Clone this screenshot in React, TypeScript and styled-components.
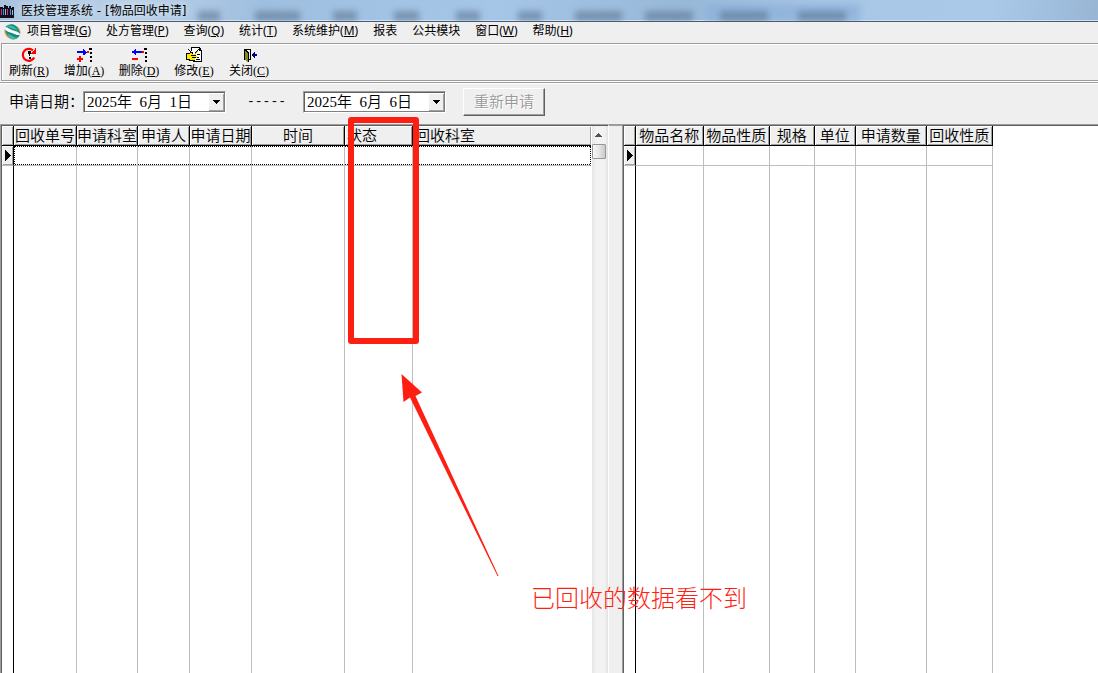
import React from "react";
import styled, { createGlobalStyle, css } from "styled-components";

const face = "#efefef";
const song = `"Liberation Serif", "Noto Sans CJK SC", serif`;
const ui = `"Noto Sans", "Noto Sans CJK SC", sans-serif`;

const GlobalStyle = createGlobalStyle`
  * { box-sizing: border-box; }
  body { margin: 0; background: ${face}; color: #000; font: 12px/16px ${ui}; }
  button, input { font: inherit; color: inherit; margin: 0; padding: 0; border: 0; border-radius: 0; background: none; }
`;

const Shell = styled.div`
  display: flex;
  flex-direction: column;
  min-height: 100vh;
`;

const TitleBar = styled.header`
  position: relative;
  display: flex;
  align-items: center;
  height: 22px;
  gap: 6px;
  overflow: hidden;
  border-bottom: 1px solid #4c5a70;
  box-shadow: inset 0 -1px #d3e2f2;
  background: linear-gradient(100deg, #a9c3df 0%, #b9cfe6 12%, #9fbfe0 24%, #a6c6e8 45%, #98b8d8 62%, #a8c6e6 74%, #aac8e8 90%, #98b6d4 100%);
`;

const Title = styled.h1`
  position: relative;
  margin: 0;
  font: 12px/20px "DejaVu Sans", "Noto Sans CJK SC", sans-serif;
  white-space: pre;
  text-shadow: 0 0 6px #dbe8f5, 0 0 10px #dbe8f5;
`;

const Tint = styled.span`
  position: absolute;
  left: 705px;
  top: 4px;
  width: 155px;
  height: 18px;
  background: #8cb0d8;
  opacity: 0.7;
  filter: blur(3px);
`;

const Smudge = styled.span<{ $x: number; $w: number }>`
  position: absolute;
  left: ${(p) => p.$x}px;
  width: ${(p) => p.$w}px;
  top: 11px;
  height: 10px;
  background: #5a7590;
  opacity: 0.6;
  filter: blur(3px);
`;

const MenuBar = styled.nav`
  display: flex;
  align-items: center;
  height: 21px;
  padding: 0 4px 3px;
  gap: 15px;
  button { white-space: nowrap; line-height: 18px; }
  svg { margin-right: -9px; flex: none; }
`;

const ToolBar = styled.div`
  display: flex;
  height: 38px;
  margin-left: 1px;
  border: 1px solid #9c9c9c;
  border-right: 0;
  box-shadow: inset 1px 1px #fff;
`;

const Tool = styled.button`
  display: flex;
  flex-direction: column;
  align-items: center;
  width: 55px;
  padding: 3px 1px 0 0;
  font: 12px/16px ${song};
  white-space: nowrap;
`;

const FilterBar = styled.form`
  display: flex;
  align-items: center;
  height: 43px;
  padding: 0 10px 2px 9px;
  border-top: 1px solid #fff;
  box-shadow: inset 0 1px #9c9c9c, inset 0 2px #fff;
  font: 15px/20px ${song};
`;

const DateLabel = styled.label`
  width: 74px;
  font-weight: 350;
  white-space: nowrap;
`;

const DateBox = styled.div`
  display: flex;
  width: 143px;
  height: 22px;
  border: 1px solid;
  border-color: #9c9c9c #fff #fff #9c9c9c;
  box-shadow: inset 1px 1px #606060, inset -1px -1px #808080;
  padding: 1px;
  background: #fff;
  input { flex: 1; min-width: 0; padding-left: 2px; outline: 0; font-weight: 350; }
`;

const raised = css`
  background: ${face};
  box-shadow: inset 1px 1px #fff, inset -1px -1px #a0a0a0;
`;

const DropButton = styled.button`
  display: grid;
  place-items: center;
  width: 16px;
  ${DateBox} & { ${raised} }
`;

const Dashes = styled.span`
  margin: 0 17px 0 21px;
  font-family: "Liberation Mono", monospace;
  font-size: 13px;
`;

const Reapply = styled.button`
  width: 82px;
  height: 28px;
  margin-left: 17px;
  border: 1px solid;
  border-color: #fff #606060 #606060 #fff;
  box-shadow: inset -1px -1px #a0a0a0;
  font-weight: 350;
  &:disabled { color: #999; text-shadow: 1px 1px #fff; }
`;

const Work = styled.main`
  position: relative;
  display: flex;
  flex: 1;
`;

const Pane = styled.section<{ $grow: number }>`
  display: flex;
  flex: ${(p) => p.$grow} 1 0;
  min-width: 0;
  padding: 2px 0 0 2px;
  background: #fff;
  box-shadow: inset 1px 1px #9c9c9c, inset 2px 2px #606060;
`;

const Splitter = styled.div`
  width: 14px;
  border-top: 2px solid #9c9c9c;
  border-left: 1px solid #fff;
`;

const Grid = styled.table<{ $fill?: boolean }>`
  table-layout: fixed;
  width: ${(p) => (p.$fill ? "100%" : "369px")};
  border-spacing: 0;
  font: 15px/18px ${song};
  ${(p) => p.$fill && css`flex: 1; min-width: 0;`}
  tr > :first-child { border-right-color: #000; }
`;

const Head = styled.th<{ $left?: boolean; $open?: boolean }>`
  height: 20px;
  padding: 1px 0 0 ${(p) => (p.$left ? 2 : 0)}px;
  font-weight: 350;
  text-align: ${(p) => (p.$left ? "left" : "center")};
  white-space: nowrap;
  overflow: hidden;
  border-right: ${(p) => (p.$open ? 0 : 1)}px solid #000;
  border-bottom: 1px solid #000;
  ${raised}
`;

const Cell = styled.td<{ $open?: boolean }>`
  padding: 0;
  border-right: ${(p) => (p.$open ? 0 : 1)}px solid #bdbdbd;
`;

const CurrentRow = styled.tr<{ $focus?: boolean }>`
  td { height: 20px; border-bottom: 1px solid #bdbdbd; }
  td:first-child { ${raised} }
  td:not(:first-child) {
    ${(p) =>
      p.$focus &&
      css`
        background:
          repeating-linear-gradient(90deg, #000 0 1px, #fff 1px 2px) top / 100% 1px no-repeat,
          repeating-linear-gradient(90deg, #000 0 1px, #fff 1px 2px) bottom / 100% 1px no-repeat;
        background-clip: padding-box;
      `}
  }
  td:last-child { ${(p) => p.$focus && css`border-right: 1px dotted #000;`} }
  td:nth-child(2) { ${(p) => p.$focus && css`border-left: 1px dotted #000;`} }
  svg { display: block; margin-left: 3px; }
`;

const ScrollTrack = styled.div`
  display: flex;
  flex-direction: column;
  align-items: center;
  width: 17px;
  padding-right: 1px;
  flex: none;
  background: linear-gradient(90deg, #fff 1px, #e6e6e6 1px, #f2f2f2 30%, #f2f2f2 80%, #e2e2e2);
`;

const ScrollArrow = styled.button`
  display: grid;
  place-items: center;
  width: 15px;
  height: 18px;
`;

const Thumb = styled.div`
  width: 14px;
  height: 15px;
  border: 1px solid #979797;
  border-radius: 1px;
  background: linear-gradient(90deg, #f6f6f6, #e6e6e6 50%, #c9c9c9);
`;

const Highlight = styled.div`
  position: absolute;
  left: 348px;
  top: -7px;
  width: 71px;
  height: 227px;
  border: 6px solid #ff1f12;
  border-radius: 3px;
`;

const Pointer = styled.svg`
  position: absolute;
  left: 398px;
  top: 246px;
`;

const Note = styled.p`
  position: absolute;
  left: 531px;
  top: 463px;
  margin: 0;
  color: #ff1f12;
  font: 300 24px/24px ${song};
  white-space: nowrap;
`;

const AppIcon = () => (
  <svg width="15" height="14" viewBox="0 0 15 14" shapeRendering="crispEdges" aria-hidden>
    <path d="M0 4h4v8H0zM4 2h4v10H4zM8 4h6v8H8z" fill="#10101c" />
    <path d="M0 3h3v1H0zM4 1h2v1H4zM9 2h2v2H9zM12 3h2v1h-2zM0 12h14v2H0z" fill="#10101c" />
    <path d="M3 5h1v6H3zM10 5h1v6h-1z" fill="#5c80ff" />
    <path d="M1 5h1v6H1zM7 5h1v6H7z" fill="#e02868" />
    <path d="M5 5h1v6H5zM12 6h1v5h-1z" fill="#78d0d0" />
  </svg>
);

const Globe = () => (
  <svg width="17" height="17" viewBox="0 0 17 17" aria-hidden>
    <path d="M1 4C4 1 9 0 12 3c3 2 4 4 4 8C14 8 11 8 8 7 5 6 4 4 1 4Z" fill="#148a82" />
    <path d="M2 3.500C6 1 11 3 14.500 8 12 6.500 10 6.500 8 5.500 6 4.500 4 3.500 2 3.500Z" fill="#3cbca8" />
    <path d="M0 6c0 5 3 10 9 10.500C6 14.500 6 12.500 4.500 10.500 3 8.500 1 9 0 6Z" fill="#f0983c" />
    <path d="M1 6c2 3 4 3 7 4 3 1 5 3 8 1.500C15 15 11 17 8 16 4 14 2 11 1 6Z" fill="#148a82" />
    <path d="M3 10c2 2 5 2 7 4 2 1 3 1 4 0-2 3-6 3-8 1-1-1-2-3-3-5Z" fill="#3cbca8" />
    <path d="M12 2.500c3 1.500 5 5 4.500 9-.500-3-2-6-4.500-9Z" fill="#f0983c" />
    <path d="M1 5c4 0 4 2 7 3s6 1 8 4c-3 0-5-1-7-2.500C6 8.500 3 9 1 5Z" fill="#fff" />
  </svg>
);

const icons = {
  refresh: (
    <>
      <path d="M13.200 10.500A6 6 0 1 1 12 3.500" fill="none" stroke="#f00" strokeWidth="2.200" shapeRendering="auto" />
      <path d="M15 1v6H10V6h1V5h1V4h1V3h1V1z" fill="#f00" />
      <path d="M7 4h3v3H9v2H8V7H7zM8 10h2v2H8z" fill="#000" />
    </>
  ),
  add: (
    <>
      <path d="M1 4h6V2h1v1h1v1h1v1h1v1h-1v1H9v1H7V6H1z" fill="#00f" />
      <path d="M3 9h2v2h2v2H5v2H3v-2H1v-2h2zM11 4h2v2h-2z" fill="#f00" />
      <path d="M13 1h3v2h-3zM14 5h2v2h-2zM14 9h2v2h-2zM14 13h2v2h-2z" fill="#000" />
    </>
  ),
  remove: (
    <>
      <path d="M11 4H5V2H4v1H3v1H1v2h2v1h1v1h1V6h6z" fill="#00f" />
      <path d="M1 11h6v2H1zM11 4h2v2h-2z" fill="#f00" />
      <path d="M13 1h3v2h-3zM14 5h2v2h-2zM14 9h2v2h-2zM14 13h2v2h-2z" fill="#000" />
    </>
  ),
  edit: (
    <>
      <path d="M5 1h9v1h1v1h1v12H5z" fill="#fff" />
      <path d="M5 0h9v1H5zM14 1h1v2h1v12H7v-1h8V4h-2V1zM5 1h1v3H5zM9 10h4v1H9zM11 7h3v1h-3zM10 12h4v1h-4z" fill="#000" />
      <path d="M1 7h3V6h3v1h3v2h1v2h-2v2H4v-1H1z" fill="#ffe800" />
      <path d="M0 6h4V5h3v1H4v1H1v5h3v1h5v1H3v-1H0zM5 8h5v1H5zM6 10h4v1H6zM2 2h1v1h1v1h1v1h1v1h1v1H6V6H5V5H4V4H3V3H2zM12 2h1v1h-1v2h-1v1h-1v1H9V5h1V4h1V3h1z" fill="#000" />
      <path d="M11 4h1v1h-1v1h-1v1H9V6h1V5h1z" fill="#b8a000" />
    </>
  ),
  close: (
    <>
      <path d="M3 2h7v11H8v-1h1V3H4v9h1v1H3z" fill="#000" />
      <path d="M4 3h1v1h1v1h1v10H6v-1H5v-1H4z" fill="#8a8a18" />
      <path d="M4 2h1v1h1v1h1v1h1v10H7V6H6V5H5V4H4z" fill="#000" />
      <path d="M11 7h1V6h1V5h1v2h2v2h-2v2h-1v-1h-1V9h-1z" fill="#000080" />
    </>
  ),
};

const tools: [keyof typeof icons, string, string][] = [
  ["refresh", "刷新", "R"],
  ["add", "增加", "A"],
  ["remove", "删除", "D"],
  ["edit", "修改", "E"],
  ["close", "关闭", "C"],
];

const menus: [string, string?][] = [
  ["项目管理", "G"],
  ["处方管理", "P"],
  ["查询", "Q"],
  ["统计", "T"],
  ["系统维护", "M"],
  ["报表"],
  ["公共模块"],
  ["窗口", "W"],
  ["帮助", "H"],
];

const smudges = [
  [198, 22], [255, 45], [333, 24], [394, 25], [456, 24],
  [518, 24], [575, 47], [645, 48], [720, 48], [798, 48],
];

type Column = { name: string; width?: number; left?: boolean };

const requestColumns: Column[] = [
  { name: "回收单号", width: 63 },
  { name: "申请科室", width: 61 },
  { name: "申请人", width: 52 },
  { name: "申请日期", width: 62 },
  { name: "时间", width: 93 },
  { name: "状态", width: 68, left: true },
  { name: "回收科室", left: true },
];

const itemColumns: Column[] = [
  { name: "物品名称", width: 68 },
  { name: "物品性质", width: 66 },
  { name: "规格", width: 45 },
  { name: "单位", width: 41 },
  { name: "申请数量", width: 71 },
  { name: "回收性质", width: 66 },
];

const Caption = ({ text, hotkey }: { text: string; hotkey?: string }) => (
  <span>
    {text}
    {hotkey && <>(<u>{hotkey}</u>)</>}
  </span>
);

const DateField = ({ id, value, label }: { id: string; value: string; label?: string }) => (
  <DateBox>
    <input id={id} defaultValue={value} aria-label={label} />
    <DropButton type="button" aria-label="选择日期">
      <svg width="7" height="4" shapeRendering="crispEdges"><path d="M0 0h7v1H6v1H5v1H4v1H3V3H2V2H1V1H0z" /></svg>
    </DropButton>
  </DateBox>
);

const DataGrid = ({ columns, fill }: { columns: Column[]; fill?: boolean }) => (
  <Grid $fill={fill}>
    <colgroup>
      <col style={{ width: 12 }} />
      {columns.map((c) => <col key={c.name} style={{ width: c.width }} />)}
    </colgroup>
    <thead>
      <tr>
        <Head />
        {columns.map((c) => <Head key={c.name} $left={c.left} $open={!c.width}>{c.name}</Head>)}
      </tr>
    </thead>
    <tbody>
      <CurrentRow $focus={fill}>
        <Cell>
          <svg width="7" height="11" shapeRendering="crispEdges"><path d="M0 0h1v1h1v1h1v1h1v1h1v1h1v1H5v1H4v1H3v1H2v1H1v1H0z" /></svg>
        </Cell>
        {columns.map((c) => <Cell key={c.name} $open={!c.width} />)}
      </CurrentRow>
      <tr>
        <Cell />
        {columns.map((c) => <Cell key={c.name} $open={!c.width} />)}
      </tr>
    </tbody>
  </Grid>
);

export default function App() {
  return (
    <Shell>
      <GlobalStyle />
      <TitleBar>
        <Tint />
        {smudges.map(([x, w]) => <Smudge key={x} $x={x} $w={w} />)}
        <AppIcon />
        <Title>医技管理系统 - [物品回收申请]</Title>
      </TitleBar>
      <MenuBar>
        <Globe />
        {menus.map(([text, key]) => (
          <button key={text} type="button"><Caption text={text} hotkey={key} /></button>
        ))}
      </MenuBar>
      <ToolBar>
        {tools.map(([icon, text, key]) => (
          <Tool key={icon} type="button">
            <svg width="17" height="16" viewBox="0 0 17 16" shapeRendering="crispEdges" aria-hidden>{icons[icon]}</svg>
            <Caption text={text} hotkey={key} />
          </Tool>
        ))}
      </ToolBar>
      <FilterBar>
        <DateLabel htmlFor="from">申请日期：</DateLabel>
        <DateField id="from" value={"2025年\u20076月\u20071日"} />
        <Dashes>-----</Dashes>
        <DateField id="to" value={"2025年\u20076月\u20076日"} label="截止日期" />
        <Reapply type="button" disabled>重新申请</Reapply>
      </FilterBar>
      <Work>
        <Pane $grow={608}>
          <DataGrid columns={requestColumns} fill />
          <ScrollTrack>
            <ScrollArrow type="button" aria-label="向上滚动">
              <svg width="7" height="4" shapeRendering="crispEdges"><path d="M3 0h1v1h1v1h1v1h1v1H0V3h1V2h1V1h1z" fill="#505050" /></svg>
            </ScrollArrow>
            <Thumb />
          </ScrollTrack>
        </Pane>
        <Splitter />
        <Pane $grow={476}>
          <DataGrid columns={itemColumns} />
        </Pane>
        <Highlight />
        <Pointer width="104" height="206" viewBox="398 370 104 206" aria-hidden>
          <path d="M401.500 374 422 392.500 415.500 396 498.500 576H497.500L410 397.500 403.500 402Z" fill="#ff1f12" />
        </Pointer>
        <Note>已回收的数据看不到</Note>
      </Work>
    </Shell>
  );
}
